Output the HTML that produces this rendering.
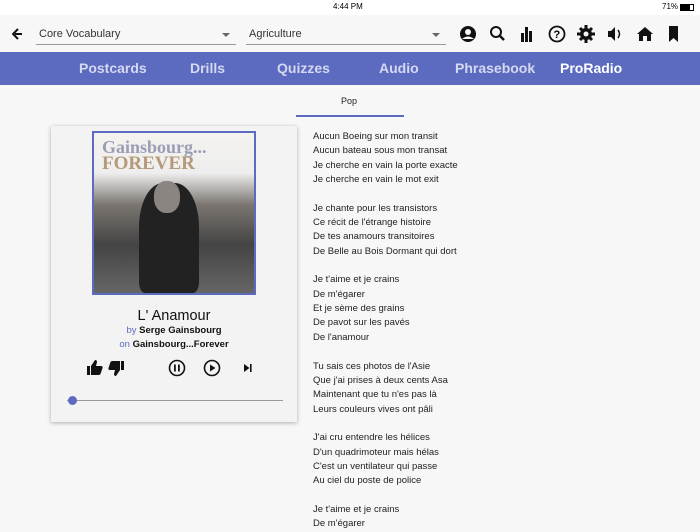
<!DOCTYPE html>
<html><head><meta charset="utf-8"><style>
*{margin:0;padding:0;box-sizing:border-box}
body{width:700px;height:525px;overflow:hidden;background:#f7f7f7;font-family:"Liberation Sans",sans-serif;position:relative}
.abs{position:absolute}
.status{top:0;left:0;width:700px;height:15px;background:#fff;font-size:8px;color:#000}
.top{top:15px;left:0;width:700px;height:37px;background:#f7f7f7}
.sel{top:10px;height:20px;border-bottom:1px solid #999;font-size:11px;color:#333;padding-left:3px;line-height:18px}
.sel:after{content:"";position:absolute;right:6px;top:8px;border:4px solid transparent;border-top:4px solid #666}
.nav{top:52px;left:0;width:700px;height:33px;background:#5c6bc0;color:#d4d8f0;font-size:14px;font-weight:bold}
.nav span{position:absolute;top:8px}
.card{left:51px;top:126px;width:246px;height:296px;background:#f3f3f3;box-shadow:0 1px 4px rgba(0,0,0,.3)}
.lyr{left:313px;top:130px;font-size:9.5px;line-height:14.35px;color:#222}
.ic{fill:#111}
</style></head><body>
<div class="abs status"><span class="abs" style="left:333px;top:2px">4:44 PM</span><span class="abs" style="left:662px;top:2px">71%</span><span class="abs" style="left:680px;top:4px;width:14px;height:7px;border:1px solid #000;"><span style="display:block;width:9px;height:5px;background:#000"></span></span></div>
<div class="abs top">
<svg class="abs" style="left:12px;top:12px" width="12" height="14" viewBox="0 0 12 14"><path d="M10 7H3M6 2L1 7l5 5" stroke="#111" stroke-width="2" fill="none"/></svg>
<div class="abs sel" style="left:36px;width:200px">Core Vocabulary</div>
<div class="abs sel" style="left:246px;width:200px">Agriculture</div>
<svg class="abs" style="left:458px;top:9px" width="230" height="20" viewBox="0 0 230 20">
<circle cx="10" cy="10" r="8" class="ic"/><circle cx="10" cy="8" r="3" fill="#f7f7f7"/><path d="M4 15q6-5 12 0" fill="#f7f7f7"/>
<circle cx="38" cy="8" r="5" stroke="#111" stroke-width="2" fill="none"/><path d="M41 11l5 5" stroke="#111" stroke-width="2.5"/>
<rect x="63" y="9" width="3" height="9" class="ic"/><rect x="67" y="3" width="3" height="15" class="ic"/><rect x="71" y="7" width="3" height="11" class="ic"/>
<circle cx="99" cy="10" r="7.5" stroke="#111" stroke-width="1.8" fill="none"/><text x="95.5" y="14" font-size="11" font-weight="bold" font-family="Liberation Sans">?</text>
<circle cx="128" cy="10" r="6" class="ic"/><path d="M128 1v18M119 10h18M122 4l12 12M134 4l-12 12" stroke="#111" stroke-width="3"/><circle cx="128" cy="10" r="2.5" fill="#f7f7f7"/>
<path d="M150 7h3l4-4v14l-4-4h-3z" class="ic"/><path d="M160 6q3 4 0 8" stroke="#111" stroke-width="1.5" fill="none"/>
<path d="M179 10l8-7 8 7h-2v7h-4v-5h-4v5h-4v-7z" class="ic"/>
<path d="M211 2h9v16l-4.5-4-4.5 4z" class="ic"/>
</svg>
</div>
<div class="abs nav"><span style="left:79px">Postcards</span><span style="left:190px">Drills</span><span style="left:277px">Quizzes</span><span style="left:379px">Audio</span><span style="left:455px">Phrasebook</span><span style="left:560px;color:#fff">ProRadio</span></div>
<div class="abs" style="left:341px;top:96px;font-size:9px;color:#222">Pop</div>
<div class="abs" style="left:296px;top:115px;width:108px;height:2px;background:#5c6bc0"></div>
<div class="abs card">
<div class="abs" style="left:41px;top:5px;width:164px;height:164px;border:2px solid #5c6bc0;background:linear-gradient(#f4f2ee 0%,#eee 25%,#7a7570 45%,#444 70%,#666 100%)">
<div class="abs" style="left:8px;top:4px;font:bold 18px 'Liberation Serif',serif;color:#9a9eb4">Gainsbourg...</div>
<div class="abs" style="left:8px;top:20px;font:bold 19px 'Liberation Serif',serif;color:#b49a7a">FOREVER</div>
<div class="abs" style="left:45px;top:50px;width:60px;height:110px;background:#222;border-radius:40% 40% 10% 10%"></div>
<div class="abs" style="left:60px;top:48px;width:26px;height:32px;background:#8a8580;border-radius:45%"></div>
</div>
<div class="abs" style="left:0;width:246px;top:182px;text-align:center;font-size:14.5px;color:#111">L' Anamour</div>
<div class="abs" style="left:0;width:246px;top:199px;text-align:center;font-size:9.5px;color:#111"><span style="color:#5c6bc0">by </span><b>Serge Gainsbourg</b></div>
<div class="abs" style="left:0;width:246px;top:213px;text-align:center;font-size:9.5px;color:#111"><span style="color:#5c6bc0">on </span><b>Gainsbourg...Forever</b></div>
<svg class="abs" style="left:34px;top:232px" width="180" height="20" viewBox="0 0 180 20">
<path d="M2 8h3v9H2zM6 8l4-6q2 0 2 2l-1 4h5q2 0 1.5 2l-2 6q-.5 1-2 1H6z" class="ic"/>
<path d="M39 12h-3V3h3zM35 12l-4 6q-2 0-2-2l1-4h-5q-2 0-1.5-2l2-6q.5-1 2-1h7.5z" class="ic"/>
<circle cx="92" cy="10" r="7.5" stroke="#111" stroke-width="1.6" fill="none"/><rect x="89" y="6.5" width="1.8" height="7" class="ic"/><rect x="93" y="6.5" width="1.8" height="7" class="ic"/>
<circle cx="127" cy="10" r="7.5" stroke="#111" stroke-width="1.6" fill="none"/><path d="M125 6.5v7l5.5-3.5z" class="ic"/>
<path d="M159 6v8l5.5-4zM165 6h1.6v8H165z" class="ic"/>
</svg>
<div class="abs" style="left:16px;top:274px;width:216px;height:1px;background:#999"></div>
<div class="abs" style="left:17px;top:270px;width:9px;height:9px;border-radius:50%;background:#5c6bc0"></div>
</div>
<div class="abs lyr">Aucun Boeing sur mon transit<br>Aucun bateau sous mon transat<br>Je cherche en vain la porte exacte<br>Je cherche en vain le mot exit<br><br>Je chante pour les transistors<br>Ce récit de l'étrange histoire<br>De tes anamours transitoires<br>De Belle au Bois Dormant qui dort<br><br>Je t'aime et je crains<br>De m'égarer<br>Et je sème des grains<br>De pavot sur les pavés<br>De l'anamour<br><br>Tu sais ces photos de l'Asie<br>Que j'ai prises à deux cents Asa<br>Maintenant que tu n'es pas là<br>Leurs couleurs vives ont pâli<br><br>J'ai cru entendre les hélices<br>D'un quadrimoteur mais hélas<br>C'est un ventilateur qui passe<br>Au ciel du poste de police<br><br>Je t'aime et je crains<br>De m'égarer</div>
</body></html>
